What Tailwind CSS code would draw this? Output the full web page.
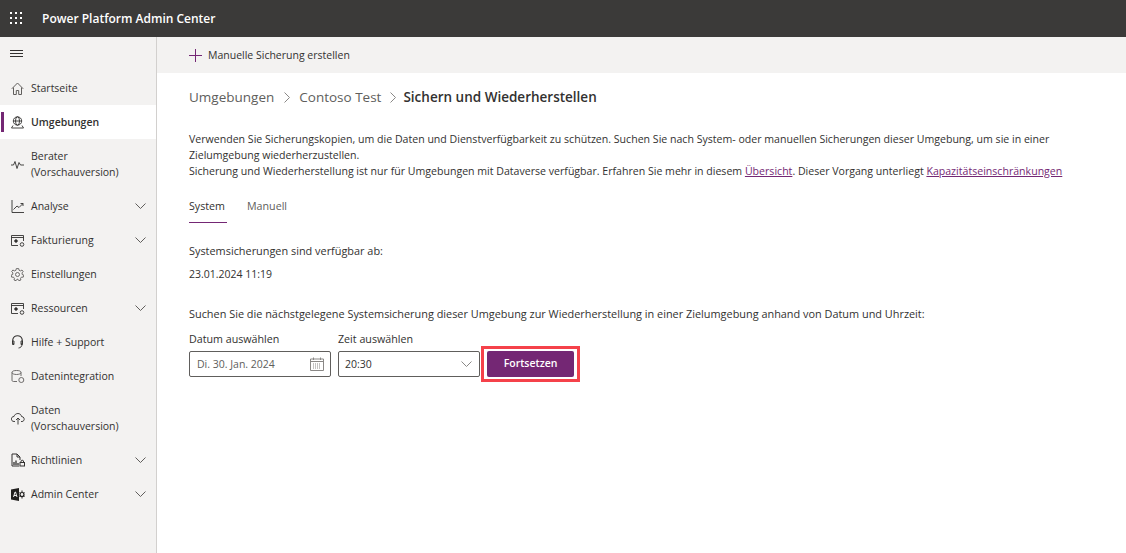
<!DOCTYPE html>
<html lang="de">
<head>
    <meta charset="UTF-8">
    <title>Power Platform Admin Center</title>
    <script src="https://cdn.jsdelivr.net/npm/@tailwindcss/browser@4"></script>
</head>
<body class="h-[553px] w-[1126px] overflow-hidden bg-white font-['Open_Sans',sans-serif] text-[10.9px] text-[#323130]">
    <!-- Kopfzeile -->
    <header class="flex h-[37px] items-center bg-[#3b3a39] text-white">
        <svg class="ml-[10px] h-[13px] w-[13px]" viewBox="0 0 13 13" fill="#fff">
            <rect x="0" y="0" width="2" height="2"/><rect x="5" y="0" width="2" height="2"/><rect x="10" y="0" width="2" height="2"/>
            <rect x="0" y="5" width="2" height="2"/><rect x="5" y="5" width="2" height="2"/><rect x="10" y="5" width="2" height="2"/>
            <rect x="0" y="10" width="2" height="2"/><rect x="5" y="10" width="2" height="2"/><rect x="10" y="10" width="2" height="2"/>
        </svg>
        <span class="ml-[19px] text-[12px] font-semibold">Power Platform Admin Center</span>
    </header>

    <div class="flex h-[516px]">
        <!-- Seitenleiste -->
        <nav class="w-[157px] shrink-0 border-r border-[#d2d0ce] bg-[#f3f2f1] text-[10.5px]">
            <div class="flex h-[34px] items-center pl-[10px]">
                <svg class="h-[10px] w-[13px]" viewBox="0 0 13 10" stroke="#323130" fill="none"><path d="M0 1.500h13M0 4.500h13M0 7.500h13"/></svg>
            </div>
            <a class="flex h-[34px] items-center">
                <svg class="ml-[11px] h-[13px] w-[13px]" viewBox="0 0 13 13" fill="none" stroke="#605e5c"><path d="M.8 6.800 6.500 1l5.700 5.800M2.500 5.500v7h2.800V8.500h2.400v4h2.800v-7"/></svg>
                <span class="ml-[7px] pt-px">Startseite</span>
            </a>
            <a class="relative flex h-[34px] items-center bg-white font-semibold">
                <span class="absolute left-[1px] top-[7px] h-[20px] w-[3px] bg-[#742774]"></span>
                <svg class="ml-[11px] h-[13px] w-[13px]" viewBox="0 0 13 13" fill="none" stroke="#323130" stroke-width=".9"><circle cx="6.500" cy="5" r="4.200"/><ellipse cx="6.500" cy="5" rx="2" ry="4.200"/><path d="M2.300 5h8.400M.5 12h12M2 9.500.5 12M11 9.500l1.500 2.500"/></svg>
                <span class="ml-[7px] pt-px">Umgebungen</span>
            </a>
            <a class="flex h-[50px] items-center">
                <svg class="ml-[11px] h-[13px] w-[13px]" viewBox="0 0 13 13" fill="none" stroke="#323130" stroke-width=".9"><path d="M0 7h2.500L4 3.500 6 10.500 8 4.500 9.500 7H13"/></svg>
                <span class="ml-[7px] leading-[16px]">Berater<br>(Vorschauversion)</span>
            </a>
            <a class="flex h-[34px] items-center">
                <svg class="ml-[11px] h-[13px] w-[13px]" viewBox="0 0 13 13" fill="none" stroke="#323130" stroke-width=".9"><path d="M1 0v12.500h12M2.500 9.500 6 6l2 1.500L12 3.500M9.500 3.500H12V6"/></svg>
                <span class="ml-[7px] pt-px">Analyse</span>
                <svg class="ml-auto mr-[10px] h-[6px] w-[11px]" viewBox="0 0 11 6" fill="none" stroke="#605e5c"><path d="m.5.500 5 5 5-5"/></svg>
            </a>
            <a class="flex h-[34px] items-center">
                <svg class="ml-[11px] h-[13px] w-[14px]" viewBox="0 0 14 13" fill="none" stroke="#323130" stroke-width=".9"><path d="M7 11.500H.5v-10h12V7M.5 3.500h12"/><circle cx="5" cy="7" r="1.300" fill="#323130"/><circle cx="11" cy="10.500" r="1.800"/></svg>
                <span class="ml-[6px] pt-px">Fakturierung</span>
                <svg class="ml-auto mr-[10px] h-[6px] w-[11px]" viewBox="0 0 11 6" fill="none" stroke="#605e5c"><path d="m.5.500 5 5 5-5"/></svg>
            </a>
            <a class="flex h-[34px] items-center">
                <svg class="ml-[11px] h-[13px] w-[13px]" viewBox="0 0 13 13" fill="none" stroke="#605e5c" stroke-width=".9"><circle cx="6.500" cy="6.500" r="2"/><path d="M5.300.600h2.400l.4 1.700 1.400.6 1.500-.9 1.200 1.700-1.200 1.200.2 1.600 1.600.6-.6 2.100-1.700-.1-1 1.200.4 1.700-2.100.7-.9-1.500H6l-.9 1.500L3 12l.4-1.700-1-1.200-1.700.1L.1 7.100l1.600-.6.2-1.600L.7 3.700 1.900 2l1.500.9 1.500-.6z"/></svg>
                <span class="ml-[7px] pt-px">Einstellungen</span>
            </a>
            <a class="flex h-[34px] items-center">
                <svg class="ml-[11px] h-[13px] w-[14px]" viewBox="0 0 14 13" fill="none" stroke="#323130" stroke-width=".9"><path d="M7 11.500H.5v-10h12V7M.5 3.500h12"/><circle cx="5" cy="7" r="1.300" fill="#323130"/><circle cx="11" cy="10.500" r="1.800"/></svg>
                <span class="ml-[6px] pt-px">Ressourcen</span>
                <svg class="ml-auto mr-[10px] h-[6px] w-[11px]" viewBox="0 0 11 6" fill="none" stroke="#605e5c"><path d="m.5.500 5 5 5-5"/></svg>
            </a>
            <a class="flex h-[34px] items-center">
                <svg class="ml-[11px] h-[14px] w-[13px]" viewBox="0 0 13 14" fill="none" stroke="#323130"><path d="M2.500 9.500C1 7 1 .8 6.500.8S12 7 10.500 9.500" stroke-width="1.100"/><path d="M1.500 6v3.500h1.500V6zM10 6v3.500h1.500V6zM11 9.500c0 2-1.500 3.300-3.500 3.500" stroke-width=".9"/></svg>
                <span class="ml-[7px] pt-px">Hilfe + Support</span>
            </a>
            <a class="flex h-[34px] items-center">
                <svg class="ml-[11px] h-[13px] w-[14px]" viewBox="0 0 14 13" fill="none" stroke="#605e5c" stroke-width=".9"><path d="M6 11.500H2.500C1.500 11.500 1 11 1 10V2.500C1 1 3 .5 5.500.5S10 1 10 2.500V6M1 2.500c0 1.200 2 2 4.500 2s4.500-.8 4.500-2"/><circle cx="10.300" cy="10" r="2.500"/></svg>
                <span class="ml-[6px] pt-px">Datenintegration</span>
            </a>
            <a class="flex h-[50px] items-center">
                <svg class="ml-[11px] h-[13px] w-[14px]" viewBox="0 0 14 13" fill="none" stroke="#323130" stroke-width=".9"><path d="M4 9.500H3C-.5 9.500-.5 4.500 3 4.500 4 .5 10 .5 10.500 4.500c3.500 0 3.500 5 .5 5h-1M7 12.500V6M5 8l2-2 2 2"/></svg>
                <span class="ml-[6px] leading-[16px]">Daten<br>(Vorschauversion)</span>
            </a>
            <a class="flex h-[34px] items-center">
                <svg class="ml-[11px] h-[14px] w-[14px]" viewBox="0 0 14 14" fill="none" stroke="#323130"><path d="M8 13H1V1h5l3 3v3M6 1v3h3"/><path d="M3 12V9M5 12V7.500M7 12v-2" stroke-width="1.300"/><rect x="9" y="9.500" width="4.500" height="3.500"/><path d="M10 9.500V8c0-1 2.500-1 2.500 0v1.500"/></svg>
                <span class="ml-[6px] pt-px">Richtlinien</span>
                <svg class="ml-auto mr-[10px] h-[6px] w-[11px]" viewBox="0 0 11 6" fill="none" stroke="#605e5c"><path d="m.5.500 5 5 5-5"/></svg>
            </a>
            <a class="flex h-[34px] items-center">
                <svg class="ml-[11px] h-[13px] w-[14px]" viewBox="0 0 14 13"><path d="M0 1.500 8 0v13l-8-1.500z" fill="#201f1e"/><path d="M2.500 9 4 4h.5L6 9M3 7.500h2.500" fill="none" stroke="#fff" stroke-width=".9"/><circle cx="11" cy="6.500" r="2" fill="none" stroke="#201f1e" stroke-width="1.200"/><path d="M11 2.500v1.500M11 9v1.500M8.500 4.500 10 5.500M12 7.500l1.500 1M8.500 8.500 10 7.500M12 5.500l1.500-1" stroke="#201f1e"/></svg>
                <span class="ml-[6px] pt-px">Admin Center</span>
                <svg class="ml-auto mr-[10px] h-[6px] w-[11px]" viewBox="0 0 11 6" fill="none" stroke="#605e5c"><path d="m.5.500 5 5 5-5"/></svg>
            </a>
        </nav>

        <!-- Inhalt -->
        <main class="min-w-0 flex-1">
            <div class="flex h-[36px] items-center bg-[#f3f2f1] pl-[32px]">
                <svg class="h-[13px] w-[13px]" viewBox="0 0 13 13" stroke="#742774" fill="none"><path d="M6.500 0v13M0 6.500h13"/></svg>
                <span class="ml-[6px] pt-px text-[10.5px]">Manuelle Sicherung erstellen</span>
            </div>

            <div class="pl-[32px]">
                <div class="mt-[14px] flex h-[20px] items-center text-[13.5px] text-[#605e5c]">
                    <span>Umgebungen</span>
                    <svg class="ml-[10px] mr-[9px] h-[11px] w-[6px]" viewBox="0 0 6 11" fill="none" stroke="#8a8886"><path d="m.5.500 5 5-5 5"/></svg>
                    <span>Contoso Test</span>
                    <svg class="ml-[9px] mr-[7px] h-[11px] w-[6px]" viewBox="0 0 6 11" fill="none" stroke="#8a8886"><path d="m.5.500 5 5-5 5"/></svg>
                    <span class="font-semibold text-[#323130]">Sichern und Wiederherstellen</span>
                </div>

                <p class="mt-[24px] w-[880px] text-[10.58px] leading-[16px]">
                    Verwenden Sie Sicherungskopien, um die Daten und Dienstverfügbarkeit zu schützen. Suchen Sie nach System- oder manuellen Sicherungen dieser Umgebung, um sie in einer Zielumgebung wiederherzustellen.<br>
                    Sicherung und Wiederherstellung ist nur für Umgebungen mit Dataverse verfügbar. Erfahren Sie mehr in diesem <a class="text-[#742774] underline">Übersicht</a>. Dieser Vorgang unterliegt <a class="text-[#742774] underline">Kapazitätseinschränkungen</a>
                </p>

                <div class="mt-[19px] flex gap-[20px] text-[10.7px]">
                    <span class="h-[25px] w-[38px] border-b border-[#742774] leading-[16px]">System</span>
                    <span class="leading-[16px] text-[#605e5c]">Manuell</span>
                </div>

                <p class="mt-[20px] leading-[16px]">Systemsicherungen sind verfügbar ab:</p>
                <p class="mt-[7px] text-[10.5px] leading-[16px]">23.01.2024 11:19</p>
                <p class="mt-[24px] leading-[16px]">Suchen Sie die nächstgelegene Systemsicherung dieser Umgebung zur Wiederherstellung in einer Zielumgebung anhand von Datum und Uhrzeit:</p>

                <div class="mt-[9px] flex items-end">
                    <div class="w-[142px]">
                        <label class="block h-[20px] text-[10.7px] leading-[16px]">Datum auswählen</label>
                        <div class="flex h-[26px] items-center justify-between rounded-[2px] border border-[#605e5c] pl-[7px] pr-[6px] text-[10.5px] text-[#605e5c]">
                            <span class="pt-px">Di. 30. Jan. 2024</span>
                            <svg class="h-[14px] w-[14px]" viewBox="0 0 14 14" fill="none" stroke="#8a8886"><path d="M.5 2h13v11.500H.5zM.5 4.500h13M3.500.500V3M10.500.500V3"/><path d="M3 7h8M3 9h8M3 11h8" stroke-dasharray="1 1"/></svg>
                        </div>
                    </div>
                    <div class="ml-[7px] w-[142px]">
                        <label class="block h-[20px] text-[10.7px] leading-[16px]">Zeit auswählen</label>
                        <div class="flex h-[26px] items-center justify-between rounded-[2px] border border-[#605e5c] pl-[6px] pr-[7px] text-[10.5px]">
                            <span class="pt-px">20:30</span>
                            <svg class="h-[6px] w-[11px]" viewBox="0 0 11 6" fill="none" stroke="#8a8886"><path d="m.5.500 5 5 5-5"/></svg>
                        </div>
                    </div>
                    <div class="mb-[-5px] ml-[1px] border-[3px] border-[#f5414a] px-[3px] py-[2px]">
                        <button class="block h-[26px] w-[87px] rounded-[2px] bg-[#742774] text-[10.5px] font-semibold text-white">Fortsetzen</button>
                    </div>
                </div>
            </div>
        </main>
    </div>
</body>
</html>
